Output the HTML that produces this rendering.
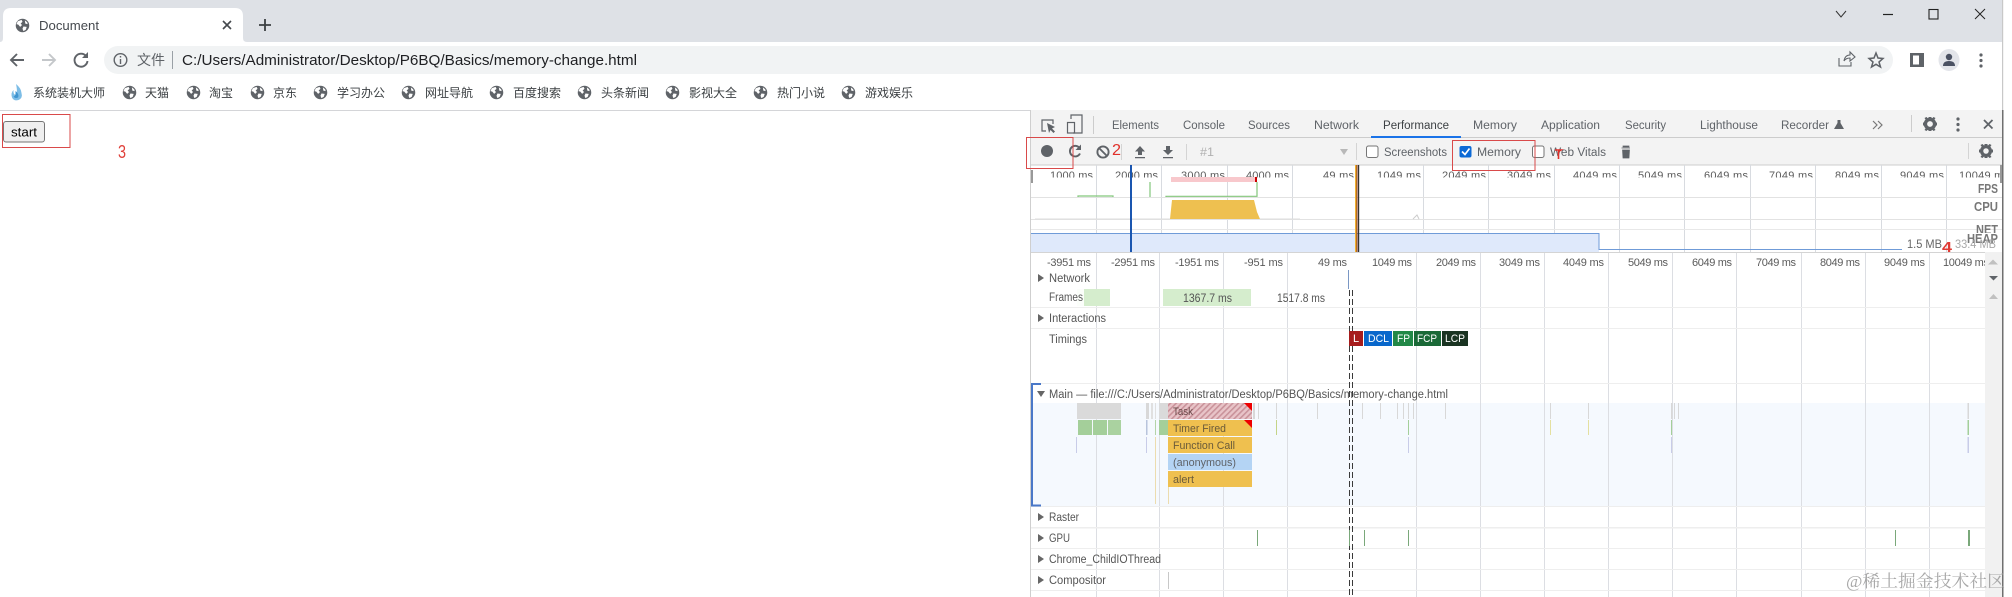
<!DOCTYPE html>
<html lang="zh">
<head>
<meta charset="utf-8">
<title>Document</title>
<style>
html,body{margin:0;padding:0;background:#fff;width:2012px;height:597px;overflow:hidden}
svg{display:block;filter:blur(.35px)}
text{font-family:"Liberation Sans","Noto Sans CJK SC",sans-serif;white-space:pre}
.t{font-size:11.5px;fill:#5f6368}
.r{font-size:11px;fill:#5a5a5a}
.o{font-size:11px;fill:#5a5a5a}
.k{font-size:11.5px;fill:#555}
.b{font-size:12px;fill:#3c4043}
.m{font-size:11px;fill:#6a5a3a}
.h{font-size:13px;fill:#777;font-weight:bold}
.w{font-size:11px;fill:#fff}
</style>
</head>
<body>
<svg xmlns="http://www.w3.org/2000/svg" width="2012" height="597" viewBox="0 0 2012 597">
<defs>
<symbol id="g" viewBox="0 0 16 16">
<circle cx="8" cy="8" r="7.2" fill="#5f6368"/>
<path d="M3 3.5 L7 2 L8 4 L6 6 L7.5 7.5 L5.5 9.5 L3.5 7 L1.5 6.5Z M9 9 L12.5 9.5 L11.5 12.5 L9 14 L8 11.5Z M10.5 2.5 L13 4.5 L13.5 6.5 L11 6 Z" fill="#fff"/>
</symbol>
<clipPath id="oc"><rect x="1031" y="165" width="971" height="12.5"/></clipPath>
<clipPath id="rc"><rect x="1031" y="252" width="954" height="18"/></clipPath>
<pattern id="hatch" width="4" height="4" patternUnits="userSpaceOnUse" patternTransform="rotate(-45)">
<rect width="4" height="4" fill="#e8c4c8"/><rect width="4" height="1.6" fill="#c9929a"/>
</pattern>
</defs>

<!-- browser chrome -->
<rect x="0" y="0" width="2002" height="42" fill="#dee1e6"/>
<rect x="0" y="42" width="2002" height="68" fill="#fff"/>
<path d="M0 42 Q3 42 3 38 V16 Q3 8 11 8 H235 Q243 8 243 16 V38 Q243 42 247 42 H0Z" fill="#fff"/>
<use href="#g" x="15" y="18" width="15" height="15"/>
<text x="39" y="30" font-size="12.5" fill="#45494e" textLength="60" lengthAdjust="spacingAndGlyphs">Document</text>
<path d="M223 21 L231 29 M231 21 L223 29" stroke="#45494e" stroke-width="1.6"/>
<path d="M265 19 V31 M259 25 H271" stroke="#3c4043" stroke-width="1.8"/>
<!-- window controls -->
<path d="M1836 11 L1841 17 L1846 11" fill="none" stroke="#333" stroke-width="1"/>
<path d="M1883 14.5 H1893" stroke="#222" stroke-width="1.2"/>
<rect x="1929" y="9.5" width="9" height="9.5" fill="none" stroke="#222" stroke-width="1.1"/>
<path d="M1975 9 L1985 19 M1985 9 L1975 19" stroke="#222" stroke-width="1"/>
<!-- nav -->
<path d="M24 60 H11 M17 54 L11 60 L17 66" fill="none" stroke="#5f6368" stroke-width="1.9"/>
<path d="M42 60 H55 M49 54 L55 60 L49 66" fill="none" stroke="#c4c7ca" stroke-width="1.9"/>
<path d="M86 56 A6.5 6.5 0 1 0 87.5 61" fill="none" stroke="#5f6368" stroke-width="1.9"/>
<path d="M88 52 V58 H82Z" fill="#5f6368"/>
<rect x="104" y="46" width="1789" height="28" rx="14" fill="#f1f3f4"/>
<circle cx="120.5" cy="60" r="6.3" fill="none" stroke="#5f6368" stroke-width="1.4"/>
<path d="M120.5 59 V64 M120.5 56 V57.5" stroke="#5f6368" stroke-width="1.4"/>
<text x="137" y="65" font-size="14" fill="#5f6368" textLength="28">文件</text>
<rect x="172" y="51" width="1" height="18" fill="#9aa0a6"/>
<text x="182" y="65" font-size="14.5" fill="#202124" textLength="455" lengthAdjust="spacingAndGlyphs">C:/Users/Administrator/Desktop/P6BQ/Basics/memory-change.html</text>
<path d="M1839 58 V66 H1851 V62 M1844 61 Q1845 55 1850 55 V52 L1855 57 L1850 61 V58 Q1846 58 1844 61Z" fill="none" stroke="#5f6368" stroke-width="1.1"/>
<path d="M1876 53 L1878 58 L1883 58.5 L1879 62 L1880.5 67 L1876 64.3 L1871.5 67 L1873 62 L1869 58.5 L1874 58Z" fill="none" stroke="#5f6368" stroke-width="1.5"/>
<rect x="1910" y="53" width="14" height="14" fill="#5f6368"/><rect x="1913" y="55.5" width="6" height="9" fill="#fff"/>
<ellipse cx="1949" cy="60" rx="10.5" ry="11" fill="#e3e5ea"/>
<circle cx="1949" cy="57" r="3.2" fill="#4b5263"/><path d="M1943 66 Q1943 61 1949 61 Q1955 61 1955 66Z" fill="#4b5263"/>
<circle cx="1981" cy="55" r="1.6" fill="#5f6368"/><circle cx="1981" cy="60.5" r="1.6" fill="#5f6368"/><circle cx="1981" cy="66" r="1.6" fill="#5f6368"/>

<!-- bookmarks -->
<path d="M16 84 Q21 88 21.5 93 Q23 98 18.5 100 Q14 101.5 12 97.5 Q10.5 93 13.5 90 Q13 94 15.5 95 Q18 93 16 84Z" fill="#7dbde6"/>
<path d="M15.5 91 Q19.5 94 18 97.5 Q15 99 13.5 96.5 Q16 96.5 15.5 91Z" fill="#3f95d0"/>
<text x="33" y="97" class="b" textLength="72">系统装机大师</text>
<use href="#g" x="122" y="85" width="15" height="15"/><text x="145" y="97" class="b" textLength="24">天猫</text>
<use href="#g" x="186" y="85" width="15" height="15"/><text x="209" y="97" class="b" textLength="24">淘宝</text>
<use href="#g" x="250" y="85" width="15" height="15"/><text x="273" y="97" class="b" textLength="24">京东</text>
<use href="#g" x="313" y="85" width="15" height="15"/><text x="337" y="97" class="b" textLength="48">学习办公</text>
<use href="#g" x="401" y="85" width="15" height="15"/><text x="425" y="97" class="b" textLength="48">网址导航</text>
<use href="#g" x="489" y="85" width="15" height="15"/><text x="513" y="97" class="b" textLength="48">百度搜索</text>
<use href="#g" x="577" y="85" width="15" height="15"/><text x="601" y="97" class="b" textLength="48">头条新闻</text>
<use href="#g" x="665" y="85" width="15" height="15"/><text x="689" y="97" class="b" textLength="48">影视大全</text>
<use href="#g" x="753" y="85" width="15" height="15"/><text x="777" y="97" class="b" textLength="48">热门小说</text>
<use href="#g" x="841" y="85" width="15" height="15"/><text x="865" y="97" class="b" textLength="48">游戏娱乐</text>
<rect x="0" y="110" width="2002" height="1" fill="#d4d5d8"/>

<!-- page -->
<rect x="3.5" y="121.5" width="41" height="20.5" rx="2.5" fill="#efefef" stroke="#767676"/>
<text x="11" y="136.5" font-size="13.3" fill="#000" textLength="26" lengthAdjust="spacingAndGlyphs">start</text>
<rect x="2.5" y="114.5" width="67.5" height="33" fill="none" stroke="#d94a4a"/>
<text x="118" y="158" font-size="18" fill="#e0403a" textLength="8" lengthAdjust="spacingAndGlyphs">3</text>

<!-- devtools -->
<rect x="1030" y="110" width="972" height="55" fill="#f3f3f3"/>
<rect x="1031" y="165" width="971" height="432" fill="#fff"/>
<rect x="1030" y="110" width="1" height="487" fill="#cfcfcf"/>
<rect x="1030" y="137" width="972" height="1" fill="#ccc"/>
<rect x="1030" y="164.5" width="972" height="1" fill="#ccc"/>

<!-- tabs -->
<path d="M1046 131 H1042 V120 H1053 V124" fill="none" stroke="#5f6368" stroke-width="1.2"/>
<path d="M1047 123 L1055 127 L1052 128.5 L1055 131.5 L1053.5 133 L1050.5 130 L1049 133Z" fill="#5f6368"/>
<path d="M1071 119 V115 H1082 V133 H1073" fill="none" stroke="#5f6368" stroke-width="1.2"/><rect x="1067.5" y="122.5" width="7" height="10.5" fill="none" stroke="#5f6368" stroke-width="1.2"/>
<rect x="1093" y="116" width="1" height="18" fill="#ccc"/>
<text x="1112" y="129" class="t" textLength="47" lengthAdjust="spacingAndGlyphs">Elements</text>
<text x="1183" y="129" class="t" textLength="42" lengthAdjust="spacingAndGlyphs">Console</text>
<text x="1248" y="129" class="t" textLength="42" lengthAdjust="spacingAndGlyphs">Sources</text>
<text x="1314" y="129" class="t" textLength="45" lengthAdjust="spacingAndGlyphs">Network</text>
<text x="1383" y="129" class="t" style="fill:#3c4043" textLength="66" lengthAdjust="spacingAndGlyphs">Performance</text>
<rect x="1371" y="136" width="90" height="2" fill="#1a73e8"/>
<text x="1473" y="129" class="t" textLength="44" lengthAdjust="spacingAndGlyphs">Memory</text>
<text x="1541" y="129" class="t" textLength="59" lengthAdjust="spacingAndGlyphs">Application</text>
<text x="1625" y="129" class="t" textLength="41" lengthAdjust="spacingAndGlyphs">Security</text>
<text x="1700" y="129" class="t" textLength="58" lengthAdjust="spacingAndGlyphs">Lighthouse</text>
<text x="1781" y="129" class="t" textLength="48" lengthAdjust="spacingAndGlyphs">Recorder</text>
<path d="M1837.5 120 H1840.5 V123 L1844 129 H1834 L1837.5 123Z" fill="#5f6368"/>
<path d="M1873 121 L1877 125 L1873 129 M1878 121 L1882 125 L1878 129" fill="none" stroke="#777" stroke-width="1.2"/>
<rect x="1911" y="115" width="1" height="17" fill="#ccc"/>
<g fill="#5f6368"><circle cx="1930" cy="124" r="4.6" fill="none" stroke="#5f6368" stroke-width="3.4"/>
<path d="M1928.5 117 h3 v3 h-3z M1928.5 128 h3 v3 h-3z M1923 122.5 h3 v3 h-3z M1934 122.5 h3 v3 h-3z M1924.5 118 l2 -1 l2 2 l-2 2z M1935.5 118 l-2 -1 l-2 2 l2 2z M1924.5 130 l2 1 l2 -2 l-2 -2z M1935.5 130 l-2 1 l-2 -2 l2 -2z"/></g>
<circle cx="1958" cy="119" r="1.6" fill="#5f6368"/><circle cx="1958" cy="124.5" r="1.6" fill="#5f6368"/><circle cx="1958" cy="130" r="1.6" fill="#5f6368"/>
<path d="M1984 120 L1992.5 128.5 M1992.5 120 L1984 128.5" stroke="#5f6368" stroke-width="1.8"/>

<!-- toolbar -->
<circle cx="1047" cy="151" r="6" fill="#5f6368"/>
<path d="M1079.5 148 A5.3 5.3 0 1 0 1080 153.5" fill="none" stroke="#5f6368" stroke-width="1.9"/>
<path d="M1081 144.5 V150 H1075.5Z" fill="#5f6368"/>
<circle cx="1103" cy="152" r="5.6" fill="none" stroke="#5f6368" stroke-width="1.9"/><path d="M1099 148 L1107 156" stroke="#5f6368" stroke-width="1.9"/>
<rect x="1121" y="144" width="1" height="16" fill="#d4d4d4"/>
<path d="M1140 146 L1145 151.5 H1142 V155 H1138 V151.5 H1135Z M1135 157 H1145 V158.3 H1135Z" fill="#5f6368"/>
<path d="M1168 155 L1163 150 H1166 V146 H1170 V150 H1173Z M1163 157 H1173 V158.3 H1163Z" fill="#5f6368"/>
<rect x="1186" y="144" width="1" height="16" fill="#d4d4d4"/>
<text x="1200" y="156" font-size="11.5" fill="#b0b0b0" textLength="14" lengthAdjust="spacingAndGlyphs">#1</text>
<path d="M1340 149 H1348 L1344 155Z" fill="#b8b8b8"/>
<rect x="1356" y="143" width="1" height="17" fill="#d4d4d4"/>
<rect x="1366.5" y="146" width="11.5" height="11.5" rx="2" fill="#fff" stroke="#767676"/>
<text x="1384" y="156" class="t" textLength="63" lengthAdjust="spacingAndGlyphs">Screenshots</text>
<rect x="1459.5" y="146" width="12" height="11.5" rx="2" fill="#0b69d6"/>
<path d="M1462 151.5 L1465 154.5 L1469.5 148.5" fill="none" stroke="#fff" stroke-width="1.7"/>
<text x="1477" y="156" class="t" textLength="44" lengthAdjust="spacingAndGlyphs">Memory</text>
<rect x="1532.5" y="146" width="11.5" height="11.5" rx="2" fill="#fff" stroke="#767676"/>
<text x="1550" y="156" class="t" textLength="56" lengthAdjust="spacingAndGlyphs">Web Vitals</text>
<path d="M1621.5 148 H1630 M1623 146 H1629 V147 H1623Z M1622.5 150 H1629.5 L1629 158 H1623Z" fill="#5f6368" stroke="#5f6368" stroke-width=".7"/>
<rect x="1968" y="143" width="1" height="16" fill="#d4d4d4"/>
<circle cx="1986" cy="151" r="4.4" fill="none" stroke="#5f6368" stroke-width="3.3"/>
<path d="M1984.5 144 h3 v3 h-3z M1984.5 155 h3 v3 h-3z M1979 149.5 h3 v3 h-3z M1990 149.5 h3 v3 h-3z M1980.5 145 l2 -1 l2 2 l-2 2z M1991.5 145 l-2 -1 l-2 2 l2 2z M1980.5 157 l2 1 l2 -2 l-2 -2z M1991.5 157 l-2 1 l-2 -2 l2 -2z" fill="#5f6368"/>

<!-- overview -->
<g fill="#d8dbe0">
<rect x="1096" y="165" width="1" height="87"/><rect x="1161" y="165" width="1" height="87"/><rect x="1227" y="165" width="1" height="87"/><rect x="1292" y="165" width="1" height="87"/><rect x="1358" y="165" width="1" height="87"/><rect x="1423" y="165" width="1" height="87"/><rect x="1488" y="165" width="1" height="87"/><rect x="1554" y="165" width="1" height="87"/><rect x="1619" y="165" width="1" height="87"/><rect x="1684" y="165" width="1" height="87"/><rect x="1750" y="165" width="1" height="87"/><rect x="1815" y="165" width="1" height="87"/><rect x="1881" y="165" width="1" height="87"/><rect x="1946" y="165" width="1" height="87"/>
</g>
<rect x="1031" y="197" width="971" height="1" fill="#e2e2e2"/>
<rect x="1031" y="219" width="971" height="1" fill="#e2e2e2"/>
<rect x="1031" y="229" width="971" height="1" fill="#e8e8e8"/>
<g clip-path="url(#oc)" class="o">
<text x="1050" y="179" class="o" textLength="43">1000 ms</text>
<text x="1115" y="179" class="o" textLength="43">2000 ms</text>
<text x="1181" y="179" class="o" textLength="44">3000 ms</text>
<text x="1246" y="179" class="o" textLength="43">4000 ms</text>
<text x="1323" y="179" class="o" textLength="31">49 ms</text>
<text x="1377" y="179" class="o" textLength="44">1049 ms</text>
<text x="1442" y="179" class="o" textLength="44">2049 ms</text>
<text x="1507" y="179" class="o" textLength="44">3049 ms</text>
<text x="1573" y="179" class="o" textLength="44">4049 ms</text>
<text x="1638" y="179" class="o" textLength="44">5049 ms</text>
<text x="1704" y="179" class="o" textLength="44">6049 ms</text>
<text x="1769" y="179" class="o" textLength="44">7049 ms</text>
<text x="1835" y="179" class="o" textLength="44">8049 ms</text>
<text x="1900" y="179" class="o" textLength="44">9049 ms</text>
<text x="1959" y="179" class="o" textLength="50">10049 ms</text>
</g>
<rect x="1031" y="170" width="2" height="13" fill="#999"/>
<rect x="2000" y="165" width="2" height="18" fill="#999"/>
<rect x="1171" y="177" width="85" height="5" fill="#f8c8cc"/>
<rect x="1255" y="177" width="2" height="5" fill="#c00"/>
<g fill="none" stroke="#82c67a" stroke-width="1.2">
<path d="M1078 197 V196 H1113 V197"/>
<path d="M1150 182 V197"/>
<path d="M1166 197 V196.3 H1257 V182"/>
</g>
<path d="M1170 219 L1172 200 H1254 L1257 212 L1260 219Z" fill="#eec050"/>
<path d="M1035 219 H1170 M1260 219 H1300" stroke="#ddd" stroke-width="1"/>
<path d="M1413 219 L1417 215 L1419 219" fill="none" stroke="#ccc"/>
<path d="M1031 233.5 H1599 V252 H1031Z" fill="#dfe9fb"/>
<path d="M1031 233.5 H1599 V249.5 H1902" fill="none" stroke="#6f9bd8" stroke-width="1"/>
<rect x="1130" y="165" width="2" height="87" fill="#1a56b0"/>
<rect x="1355" y="165" width="1.5" height="87" fill="#f0b030"/>
<rect x="1356.5" y="165" width="1" height="87" fill="#7a2a10"/>
<rect x="1358" y="165" width="1.2" height="87" fill="#333"/>
<text x="1978" y="193" class="h" textLength="20" lengthAdjust="spacingAndGlyphs">FPS</text>
<text x="1974" y="211" class="h" textLength="24" lengthAdjust="spacingAndGlyphs">CPU</text>
<text x="1976" y="234" class="h" textLength="22" lengthAdjust="spacingAndGlyphs">NET</text>
<rect x="1960" y="233" width="42" height="19" fill="#fff"/>
<text x="1967" y="243" class="h" textLength="31" lengthAdjust="spacingAndGlyphs">HEAP</text>
<text x="1907" y="248" font-size="11.5" fill="#666" textLength="35" lengthAdjust="spacingAndGlyphs">1.5 MB</text>
<text x="1955" y="248" font-size="11.5" fill="#a8a8a8" textLength="41" lengthAdjust="spacingAndGlyphs">33.4 MB</text>
<rect x="1031" y="252" width="971" height="1" fill="#d4d4d4"/>

<!-- main grid -->
<rect x="1985" y="252" width="17" height="345" fill="#f1f1f1"/>
<rect x="1032" y="403" width="953" height="103" fill="#f5f9fe"/>
<g fill="#dcdee3">
<rect x="1096" y="253" width="1" height="344"/><rect x="1159" y="253" width="1" height="344"/><rect x="1223" y="253" width="1" height="344"/><rect x="1287" y="253" width="1" height="344"/><rect x="1416" y="253" width="1" height="344"/><rect x="1480" y="253" width="1" height="344"/><rect x="1544" y="253" width="1" height="344"/><rect x="1608" y="253" width="1" height="344"/><rect x="1672" y="253" width="1" height="344"/><rect x="1736" y="253" width="1" height="344"/><rect x="1801" y="253" width="1" height="344"/><rect x="1865" y="253" width="1" height="344"/><rect x="1929" y="253" width="1" height="344"/>
</g>
<g fill="#eee">
<rect x="1031" y="307" width="954" height="1"/><rect x="1031" y="328" width="954" height="1"/><rect x="1031" y="383" width="954" height="1"/><rect x="1031" y="506" width="954" height="1"/><rect x="1031" y="527" width="954" height="1.5"/><rect x="1031" y="548" width="954" height="1"/><rect x="1031" y="569" width="954" height="1"/><rect x="1031" y="590" width="954" height="1"/>
</g>
<g clip-path="url(#rc)">
<text x="1047" y="266" class="r" textLength="44">-3951 ms</text>
<text x="1111" y="266" class="r" textLength="44">-2951 ms</text>
<text x="1175" y="266" class="r" textLength="44">-1951 ms</text>
<text x="1244" y="266" class="r" textLength="39">-951 ms</text>
<text x="1318" y="266" class="r" textLength="29">49 ms</text>
<text x="1372" y="266" class="r" textLength="40">1049 ms</text>
<text x="1436" y="266" class="r" textLength="40">2049 ms</text>
<text x="1499" y="266" class="r" textLength="41">3049 ms</text>
<text x="1563" y="266" class="r" textLength="41">4049 ms</text>
<text x="1628" y="266" class="r" textLength="40">5049 ms</text>
<text x="1692" y="266" class="r" textLength="40">6049 ms</text>
<text x="1756" y="266" class="r" textLength="40">7049 ms</text>
<text x="1820" y="266" class="r" textLength="40">8049 ms</text>
<text x="1884" y="266" class="r" textLength="41">9049 ms</text>
<text x="1943" y="266" class="r" textLength="46">10049 ms</text>
</g>
<path d="M1988 264.5 L1993 259.5 L1998 264.5Z" fill="#c0c0c0"/>
<path d="M1989 276 H1998 L1993.5 280.5Z" fill="#5f6368"/>
<path d="M1989 299 H1998 L1993.5 294Z" fill="#c0c0c0"/>

<!-- frames -->
<rect x="1077" y="289" width="33" height="17" fill="#d5edcd"/>
<rect x="1031" y="289" width="53" height="17" fill="#fff" opacity=".9"/>
<rect x="1163" y="289" width="88" height="17" fill="#d5edcd"/>
<text x="1183" y="302" class="k" textLength="49" lengthAdjust="spacingAndGlyphs">1367.7 ms</text>
<text x="1277" y="302" class="k" textLength="48" lengthAdjust="spacingAndGlyphs">1517.8 ms</text>

<!-- labels -->
<path d="M1038 274 L1044 278 L1038 282Z" fill="#666"/>
<text x="1049" y="282" class="k" textLength="41" lengthAdjust="spacingAndGlyphs">Network</text>
<text x="1049" y="301" class="k" textLength="34" lengthAdjust="spacingAndGlyphs">Frames</text>
<path d="M1038 314 L1044 318 L1038 322Z" fill="#666"/>
<text x="1049" y="322" class="k" textLength="57" lengthAdjust="spacingAndGlyphs">Interactions</text>
<text x="1049" y="343" class="k" textLength="38" lengthAdjust="spacingAndGlyphs">Timings</text>
<path d="M1037 391 H1045 L1041 397Z" fill="#666"/>
<text x="1049" y="398" class="k" textLength="399" lengthAdjust="spacingAndGlyphs">Main — file:///C:/Users/Administrator/Desktop/P6BQ/Basics/memory-change.html</text>
<path d="M1041 384 H1032 V505.5 H1041" fill="none" stroke="#4a78c8" stroke-width="2"/>
<path d="M1038 513 L1044 517 L1038 521Z" fill="#666"/>
<text x="1049" y="521" class="k" textLength="30" lengthAdjust="spacingAndGlyphs">Raster</text>
<path d="M1038 534 L1044 538 L1038 542Z" fill="#666"/>
<text x="1049" y="542" class="k" textLength="21" lengthAdjust="spacingAndGlyphs">GPU</text>
<path d="M1038 555 L1044 559 L1038 563Z" fill="#666"/>
<text x="1049" y="563" class="k" textLength="112" lengthAdjust="spacingAndGlyphs">Chrome_ChildIOThread</text>
<path d="M1038 576 L1044 580 L1038 584Z" fill="#666"/>
<text x="1049" y="584" class="k" textLength="57" lengthAdjust="spacingAndGlyphs">Compositor</text>

<!-- main flame -->
<rect x="1077" y="403" width="44" height="16" fill="#dadada"/>
<rect x="1146" y="403" width="3" height="16" fill="#d8d8d8"/><rect x="1151" y="403" width="2" height="16" fill="#e0e0e0"/><rect x="1155" y="403" width="1" height="16" fill="#e0e0e0"/><rect x="1159" y="403" width="9" height="16" fill="#dadada"/>
<rect x="1168" y="403" width="84" height="16" fill="url(#hatch)"/>
<path d="M1244 403 H1252 V411Z" fill="#e00"/>
<text x="1173" y="415" class="m" style="fill:#6a4a4a" textLength="20" lengthAdjust="spacingAndGlyphs">Task</text>
<g fill="#d8d8d8">
<rect x="1253" y="403" width="2" height="16"/><rect x="1258" y="403" width="1" height="16"/><rect x="1276" y="403" width="1" height="16"/><rect x="1317" y="403" width="1" height="16"/><rect x="1362" y="403" width="1" height="16"/><rect x="1380" y="403" width="1" height="16"/><rect x="1397" y="403" width="1" height="16"/><rect x="1403" y="403" width="1" height="16"/><rect x="1408" y="403" width="1" height="16"/><rect x="1413" y="403" width="1" height="16"/><rect x="1445" y="403" width="1" height="16"/><rect x="1550" y="403" width="1" height="16"/><rect x="1588" y="403" width="1" height="16"/><rect x="1671" y="403" width="1.5" height="16"/><rect x="1674" y="403" width="1" height="16"/><rect x="1678" y="403" width="1" height="16"/><rect x="1967.5" y="403" width="1.5" height="16"/>
</g>
<rect x="1078" y="420" width="14" height="15" fill="#a4cf9a"/><rect x="1093" y="420" width="14" height="15" fill="#a4cf9a"/><rect x="1108" y="420" width="13" height="15" fill="#aad2a0"/>
<rect x="1146" y="420" width="1.5" height="15" fill="#b8c4dc"/><rect x="1155" y="420" width="1" height="15" fill="#b4d4a8"/><rect x="1159" y="420" width="9" height="15" fill="#a4cf9a"/>
<rect x="1168" y="420" width="84" height="16" fill="#efc04f"/>
<path d="M1244 420 H1252 V428Z" fill="#e00"/>
<rect x="1168" y="437" width="84" height="16" fill="#efc04f"/>
<rect x="1168" y="454" width="84" height="16" fill="#b4d4f4"/>
<rect x="1168" y="471" width="84" height="16" fill="#efc04f"/>
<text x="1173" y="432" class="m" textLength="53" lengthAdjust="spacingAndGlyphs">Timer Fired</text>
<text x="1173" y="449" class="m" textLength="62" lengthAdjust="spacingAndGlyphs">Function Call</text>
<text x="1173" y="466" class="m" style="fill:#5f6368" textLength="63" lengthAdjust="spacingAndGlyphs">(anonymous)</text>
<text x="1173" y="483" class="m" textLength="21" lengthAdjust="spacingAndGlyphs">alert</text>
<g>
<rect x="1276" y="420" width="1" height="15" fill="#c4d488"/><rect x="1408" y="420" width="1" height="15" fill="#a4cf9a"/><rect x="1550" y="420" width="1" height="15" fill="#e4e0a0"/><rect x="1588" y="420" width="1" height="15" fill="#e4e0a0"/><rect x="1671" y="420" width="1" height="15" fill="#a4cf9a"/><rect x="1967.5" y="420" width="1.5" height="15" fill="#a4cf9a"/>
<rect x="1076" y="437" width="1" height="16" fill="#c8cce8"/><rect x="1146" y="437" width="1" height="16" fill="#c8cce8"/><rect x="1408" y="437" width="1" height="16" fill="#c8cce8"/><rect x="1671" y="437" width="1" height="16" fill="#c8cce8"/><rect x="1967.5" y="437" width="1.5" height="16" fill="#c8cce8"/>
<rect x="1155" y="437" width="1" height="67" fill="#ecdcae"/><rect x="1168" y="487" width="1" height="17" fill="#ecdcae"/>
</g>

<!-- timings -->
<rect x="1349" y="331" width="14" height="15" fill="#a61c1c"/>
<rect x="1364" y="331" width="28" height="15" fill="#0867cb"/>
<rect x="1393" y="331" width="20" height="15" fill="#228847"/>
<rect x="1414" y="331" width="27" height="15" fill="#1a6937"/>
<rect x="1442" y="331" width="26" height="15" fill="#1a3422"/>
<text x="1353" y="342" class="w">L</text>
<text x="1368" y="342" class="w" textLength="21" lengthAdjust="spacingAndGlyphs">DCL</text>
<text x="1397" y="342" class="w" textLength="13" lengthAdjust="spacingAndGlyphs">FP</text>
<text x="1417" y="342" class="w" textLength="20" lengthAdjust="spacingAndGlyphs">FCP</text>
<text x="1445" y="342" class="w" textLength="20" lengthAdjust="spacingAndGlyphs">LCP</text>

<!-- dashed markers -->
<path d="M1348.5 270 V289" stroke="#7a97c4" stroke-width="1"/>
<path d="M1349.5 290 V331 M1349.5 346 V597 M1352.5 290 V331 M1352.5 346 V597" stroke="#3a3a3a" stroke-width="1" stroke-dasharray="6 3" fill="none"/>

<!-- gpu -->
<g fill="#7aa87a">
<rect x="1257" y="530" width="1" height="16"/><rect x="1349" y="530" width="1" height="16"/><rect x="1364" y="530" width="1" height="16"/><rect x="1408" y="530" width="1" height="16"/><rect x="1895" y="530" width="1" height="16"/><rect x="1968" y="530" width="2" height="16"/>
</g>
<rect x="1168" y="572" width="1" height="17" fill="#c8c8c8"/>

<!-- window edge -->
<rect x="2002" y="0" width="1.2" height="110" fill="#c8c8c8"/>
<rect x="2002" y="110" width="1.5" height="487" fill="#6f6f6f"/>
<rect x="2004" y="0" width="8" height="597" fill="#fff"/>

<!-- annotations -->
<rect x="1026.5" y="137.5" width="46.5" height="31" fill="none" stroke="#d94a4a"/>
<text x="1112" y="155" font-size="16" fill="#e0302a" textLength="9" lengthAdjust="spacingAndGlyphs">2</text>
<rect x="1452.5" y="140.5" width="82.5" height="30" fill="none" stroke="#d94a4a"/>
<path d="M1555 150 H1561 L1558.5 151.5 V159" fill="none" stroke="#e0302a" stroke-width="1.6"/>
<text x="1942" y="252" font-size="15" font-weight="bold" fill="#e03a34" textLength="10" lengthAdjust="spacingAndGlyphs">4</text>

<!-- watermark -->
<text x="1846" y="587" font-size="17" fill="#9a9a9a" opacity=".85" textLength="159" lengthAdjust="spacingAndGlyphs" style="font-family:'Liberation Serif','Noto Serif CJK SC',serif">@稀土掘金技术社区</text>
</svg>
</body>
</html>
